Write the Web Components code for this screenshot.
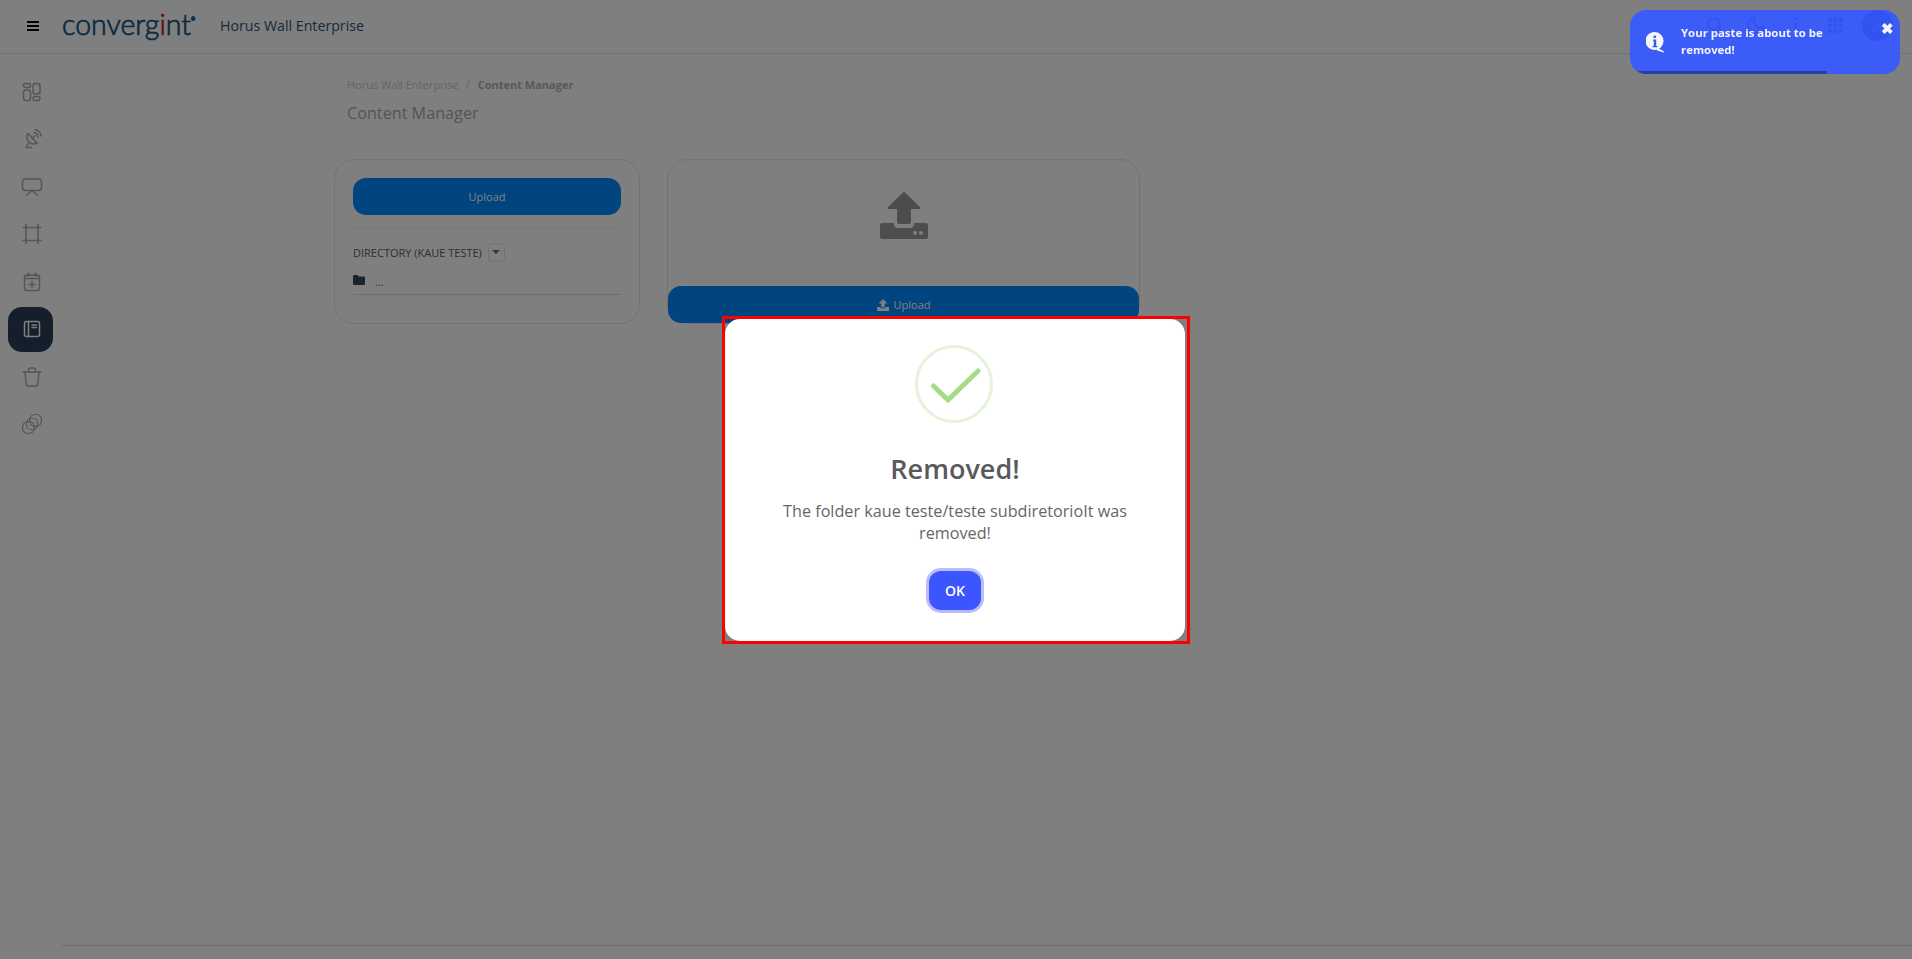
<!DOCTYPE html>
<html lang="en">
<head>
<meta charset="utf-8">
<title>Content Manager</title>
<style>
    html, body { margin: 0; height: 100%; background: #fff; overflow: hidden; }
    body { font-family: "Open Sans", "Liberation Sans", sans-serif; }
</style>
</head>
<body>
<wall-app>
    <app-header slot="header" title="Horus Wall Enterprise"></app-header>
    <side-nav slot="nav"></side-nav>
    <content-manager slot="main"></content-manager>
</wall-app>
<swal-backdrop>
    <swal-dialog heading="Removed!" text="The folder kaue teste/teste subdiretorioIt was removed!" confirm="OK"></swal-dialog>
</swal-backdrop>
<toast-note text="Your paste is about to be removed!"></toast-note>

<script>
'use strict';

const ICONS = {
    dashboard: '<rect x="1.500" y="1.500" width="7" height="4" rx="2"/><rect x="1.500" y="8" width="7" height="10.500" rx="2.500"/><rect x="11" y="1.500" width="7" height="10.500" rx="2.500"/><rect x="11" y="14.500" width="7" height="4" rx="2"/>',
    dish: '<path d="M6 4.500A6.800 6.800 0 0 0 15 14z"/><path d="M10 9.500l3-3"/><path d="M6.500 14l-2.500 4.500h5.500"/><path d="M12 3.500A4.500 4.500 0 0 1 16 8"/><path d="M13 .5A7 7 0 0 1 19 7"/>',
    screen: '<rect x=".5" y="2" width="19" height="11.500" rx="3"/><path d="M10 13.500L4.500 18"/><path d="M10 13.500l5.500 4.500"/>',
    crop: '<path d="M4 .5v19"/><path d="M16 .5v19"/><path d="M1 3.500h18"/><path d="M1 16.500h18"/>',
    calendar: '<rect x="2.500" y="3" width="15" height="15.500" rx="2.500"/><path d="M6.500 1v3"/><path d="M13.500 1v3"/><path d="M2.500 6.500h15"/><path d="M10 9.500v6"/><path d="M7 12.500h6"/>',
    notebook: '<rect x="2.500" y="2.500" width="15" height="15" rx="2"/><path d="M6.500 2.500v15"/><path d="M10 6h4.500"/><path d="M10 8.500h4.500"/>',
    trash: '<path d="M1 5h18"/><path d="M3 5l1.200 12a2 2 0 0 0 2 2h7.600a2 2 0 0 0 2-2L17 5"/><path d="M6.500 5V3a2 2 0 0 1 2-2h3a2 2 0 0 1 2 2v2"/>',
    clones: '<rect x=".5" y="7.500" width="12" height="12" rx="5.500" stroke-width="1.200"/><rect x="7.500" y=".5" width="12" height="12" rx="5.500" stroke-width="1.200"/><rect x="4.500" y="4.500" width="11" height="11" rx="4.500" stroke-width="1.200"/>',
};

class WallApp extends HTMLElement {
    constructor()
    {
        super();
        this.attachShadow({ mode: 'open' }).innerHTML = `
            <style>
                :host {
                    display: grid;
                    grid-template-rows: 54px 1fr;
                    grid-template-columns: 62px 1fr;
                    height: 100vh;
                }
                [part=header] { grid-column: 1 / 3; }
                [part=main] {
                    display: flex;
                    flex-direction: column;
                }
                footer {
                    margin-top: auto;
                    margin-bottom: 13px;
                    border-top: 1px solid #dcdcdc;
                }
            </style>
            <div part="header"><slot name="header"></slot></div>
            <div part="nav"><slot name="nav"></slot></div>
            <div part="main"><slot name="main"></slot><footer></footer></div>
        `;
    }
}

class AppHeader extends HTMLElement {
    constructor()
    {
        super();
        const title = this.getAttribute('title');
        this.attachShadow({ mode: 'open' }).innerHTML = `
            <style>
                :host {
                    display: flex;
                    align-items: center;
                    height: 54px;
                    box-sizing: border-box;
                    border-bottom: 1px solid #e4e4e4;
                    padding: 0 19px 2px 27px;
                }
                .burger { width: 12px; height: 10px; display: block; margin-right: 23px; }
                .logo {
                    font-family: Lato, "Open Sans", sans-serif;
                    font-weight: 300;
                    font-size: 28.500px;
                    line-height: 40px;
                    color: #155482;
                    width: 158px;
                    flex: none;
                    margin-top: -4px;
                    -webkit-text-stroke: .7px #155482;
                    white-space: nowrap;
                }
                .logo b { font-weight: 300; color: #c01f2a; -webkit-text-stroke-color: #c01f2a; }
                .logo sup { font-size: 5px; vertical-align: 14px; line-height: 0; }
                .title { font-size: 14.200px; font-weight: 500; color: #2f5373; }
                .tools {
                    margin-left: auto;
                    display: flex;
                    align-items: center;
                    gap: 21px;
                }
                .tools svg { display: block; width: 19px; height: 19px; fill: none; stroke: #281450; stroke-width: 2; }
                .avatar {
                    width: 31px;
                    height: 31px;
                    margin-left: -4px;
                    border-radius: 50%;
                    background: #281450;
                    color: #6d86ff;
                    font-size: 15px;
                    font-weight: 700;
                    display: grid;
                    place-items: center;
                }
            </style>
            <svg class="burger" viewBox="0 0 12 10"><path d="M0 0h12v2H0zM0 4h12v2H0zM0 8h12v2H0z" fill="#000"/></svg>
            <span class="logo">converg<b>i</b>nt<sup>®</sup></span>
            <span class="title">${title}</span>
            <div class="tools">
                <svg viewBox="0 0 19 19"><circle cx="8" cy="8" r="6"/><path d="M13 13l5 5"/></svg>
                <svg viewBox="0 0 19 19"><path d="M9 1a8 8 0 1 0 9 10A7 7 0 0 1 9 1z"/></svg>
                <svg viewBox="0 0 19 19"><path d="M9.500 1v3M9.500 7v11" stroke-width="3"/></svg>
                <svg viewBox="0 0 19 19" style="stroke:none;fill:#281450"><path d="M2 2h4v4H2zM7.500 2h4v4h-4zM13 2h4v4h-4zM2 7.500h4v4H2zM7.500 7.500h4v4h-4zM13 7.500h4v4h-4zM2 13h4v4H2zM7.500 13h4v4h-4zM13 13h4v4h-4z"/></svg>
                <span class="avatar">A</span>
            </div>
        `;
    }
}

class NavItem extends HTMLElement {
    constructor()
    {
        super();
        const icon = ICONS[this.getAttribute('icon')];
        this.attachShadow({ mode: 'open' }).innerHTML = `
            <style>
                :host {
                    display: grid;
                    place-items: center;
                    width: 45px;
                    height: 45px;
                    border-radius: 14px;
                    color: #aaa;
                }
                :host([active]) { background: #2a3e58; color: #fff; }
                svg {
                    width: 20px;
                    height: 20px;
                    margin-left: 3px;
                    fill: none;
                    stroke: currentColor;
                    stroke-width: 1.500;
                    stroke-linecap: round;
                    stroke-linejoin: round;
                    overflow: visible;
                }
            </style>
            <svg viewBox="0 0 20 20">${icon}</svg>
        `;
    }
}

class SideNav extends HTMLElement {
    constructor()
    {
        super();
        const active = 'notebook';
        const items = Object.keys(ICONS)
            .map(k => `<nav-item icon="${k}" ${k === active ? 'active' : ''}></nav-item>`)
            .join('');
        this.attachShadow({ mode: 'open' }).innerHTML = `
            <style>
                :host {
                    display: flex;
                    flex-direction: column;
                    gap: 2.500px;
                    padding: 15px 0 0 8px;
                }
            </style>
            ${items}
        `;
    }
}

class BaseCard extends HTMLElement {
    static css = `
        :host {
            display: block;
            box-sizing: border-box;
            height: 165px;
            border: 1px solid #e6e6e6;
            border-radius: 20px;
            background: #fff;
        }
        .btn {
            display: flex;
            align-items: center;
            justify-content: center;
            gap: 5px;
            height: 37px;
            background: #008aff;
            color: #fff;
            font-size: 11px;
            border-radius: 13px;
        }
    `;
}

class DirectoryCard extends BaseCard {
    constructor()
    {
        super();
        this.attachShadow({ mode: 'open' }).innerHTML = `
            <style>
                ${BaseCard.css}
                :host { width: 306px; padding: 18px 18px 0; }
                hr { border: 0; border-top: 1px dashed #e8e8e8; margin: 13px 0 0; }
                .dir {
                    display: flex;
                    align-items: center;
                    gap: 6px;
                    height: 20px;
                    margin-top: 13px;
                    font-size: 11px;
                    font-weight: 500;
                    color: #5c5c5c;
                }
                .caret {
                    display: grid;
                    place-items: center;
                    width: 17px;
                    height: 19px;
                    box-sizing: border-box;
                    border: 1px solid #e6e6e6;
                    border-radius: 4px;
                }
                .caret i { border: 4px solid transparent; border-top: 4px solid #6e6e6e; border-bottom: 0; }
                .row {
                    display: flex;
                    align-items: center;
                    gap: 10px;
                    height: 30px;
                    margin-top: 3px;
                    padding-top: 4px;
                    border-bottom: 1px solid #dcdcdc;
                    box-sizing: border-box;
                    font-size: 11px;
                    color: #5a5a5a;
                }
                .row svg { width: 12px; height: 10px; margin-top: -4px; }
            </style>
            <div class="btn">Upload</div>
            <hr>
            <div class="dir">DIRECTORY (KAUE TESTE)<span class="caret"><i></i></span></div>
            <div class="row">
                <svg viewBox="0 0 12 10"><path d="M1 0h3.500l1.500 1.500h5a1 1 0 0 1 1 1V9a1 1 0 0 1-1 1H1a1 1 0 0 1-1-1V1a1 1 0 0 1 1-1z" fill="#34465c"/></svg>
                <span>...</span>
            </div>
        `;
    }
}

class UploadCard extends BaseCard {
    constructor()
    {
        super();
        this.attachShadow({ mode: 'open' }).innerHTML = `
            <style>
                ${BaseCard.css}
                :host { width: 473px; display: flex; flex-direction: column; }
                .drop { flex: 1; display: grid; place-items: center; padding-bottom: 16px; }
                .drop svg { width: 48px; height: 48px; display: block; }
                .btn svg { width: 12px; height: 12px; }
            </style>
            <div class="drop">
                <svg viewBox="0 0 48 48" fill="#9a9a9a">
                    <path d="M24 .5L40 16a1 1 0 0 1-1 2H31v13a2 2 0 0 1-2 2H19a2 2 0 0 1-2-2V18H9a1 1 0 0 1-1-2z"/>
                    <path d="M2 32h12v1a4 4 0 0 0 4 4h12a4 4 0 0 0 4-4v-1h12a2 2 0 0 1 2 2v12a2 2 0 0 1-2 2H2a2 2 0 0 1-2-2V34a2 2 0 0 1 2-2z"/>
                    <circle cx="35" cy="42" r="2" fill="#fff"/><circle cx="41" cy="42" r="2" fill="#fff"/>
                </svg>
            </div>
            <div class="btn">
                <svg viewBox="0 0 48 48" fill="#fff">
                    <path d="M24 .5L40 16a1 1 0 0 1-1 2H31v13a2 2 0 0 1-2 2H19a2 2 0 0 1-2-2V18H9a1 1 0 0 1-1-2z"/>
                    <path d="M2 32h12v1a4 4 0 0 0 4 4h12a4 4 0 0 0 4-4v-1h12a2 2 0 0 1 2 2v12a2 2 0 0 1-2 2H2a2 2 0 0 1-2-2V34a2 2 0 0 1 2-2z"/>
                </svg>
                Upload
            </div>
        `;
    }
}

class ContentManager extends HTMLElement {
    constructor()
    {
        super();
        this.attachShadow({ mode: 'open' }).innerHTML = `
            <style>
                :host { display: block; padding: 23px 0 0 285px; }
                .crumbs { font-size: 11px; line-height: 15px; color: #c9c9c9; display: flex; gap: 7px; }
                .crumbs b { color: #b0b0b0; font-weight: 700; margin-left: 1px; }
                h1 { margin: 10px 0 0; font-size: 16.200px; line-height: 22px; font-weight: 400; color: #a8a8a8; }
                .cards { display: flex; gap: 27px; margin: 35px 0 0 -13px; }
            </style>
            <div class="crumbs"><span>Horus Wall Enterprise</span><span>/</span><b>Content Manager</b></div>
            <h1>Content Manager</h1>
            <div class="cards">
                <directory-card></directory-card>
                <upload-card></upload-card>
            </div>
        `;
    }
}

class SwalBackdrop extends HTMLElement {
    constructor()
    {
        super();
        this.attachShadow({ mode: 'open' }).innerHTML = `
            <style>
                :host {
                    position: fixed;
                    inset: 0;
                    display: grid;
                    place-items: center;
                    background: rgba(0, 0, 0, .5);
                }
            </style>
            <slot></slot>
        `;
    }
}

class SwalDialog extends HTMLElement {
    constructor()
    {
        super();
        this.attachShadow({ mode: 'open' }).innerHTML = `
            <style>
                :host {
                    display: block;
                    box-sizing: border-box;
                    width: 468px;
                    height: 328px;
                    border: 3px solid #f00;
                    padding-right: 2px;
                    margin-top: 1px;
                }
                .popup {
                    width: 460px;
                    height: 322px;
                    background: #fff;
                    border-radius: 15px;
                    display: flex;
                    flex-direction: column;
                    align-items: center;
                    color: #5a5a5a;
                }
                .icon { width: 78px; height: 78px; margin: 26px 2px 0 0; display: block; }
                h2 { margin: 29px 0 0; font-size: 27px; line-height: 34px; font-weight: 600; }
                p {
                    margin: 14px 0 0;
                    width: 360px;
                    font-size: 16.200px;
                    line-height: 22.400px;
                    text-align: center;
                    color: #666;
                }
                button {
                    margin-top: 26px;
                    width: 52px;
                    height: 39px;
                    border: 0;
                    border-radius: 12px;
                    background: #3b55ff;
                    box-shadow: 0 0 0 3px #b9bcf7;
                    color: #fff;
                    font: 600 14px "Open Sans", sans-serif;
                }
            </style>
            <div class="popup">
                <svg class="icon" viewBox="0 0 78 78">
                    <circle cx="39" cy="39" r="37.500" fill="none" stroke="#e4f3da" stroke-width="3"/>
                    <path d="M18.500 41L33 55L63 26" fill="none" stroke="#a5dc86" stroke-width="5" stroke-linecap="round" stroke-linejoin="round"/>
                </svg>
                <h2>${this.getAttribute('heading')}</h2>
                <p>${this.getAttribute('text')}</p>
                <button>${this.getAttribute('confirm')}</button>
            </div>
        `;
    }
}

class ToastNote extends HTMLElement {
    constructor()
    {
        super();
        this.attachShadow({ mode: 'open' }).innerHTML = `
            <style>
                :host {
                    position: fixed;
                    top: 10px;
                    right: 12px;
                    width: 270px;
                    height: 64px;
                    box-sizing: border-box;
                    border-radius: 16px;
                    overflow: hidden;
                    display: flex;
                    align-items: center;
                    background: rgba(54, 89, 255, .93);
                    color: #f2f3ff;
                    padding: 0 20px 3px 16px;
                    font-size: 11.400px;
                    line-height: 17px;
                    font-weight: 700;
                }
                svg { width: 19px; height: 21px; margin: 3px 16px 0 0; flex: none; }
                span { width: 165px; }
                .close {
                    position: absolute;
                    top: 9px;
                    right: 7px;
                    width: 12px;
                    font-size: 15px;
                    line-height: 18px;
                }
                .bar {
                    position: absolute;
                    left: 0;
                    bottom: 0;
                    width: 197px;
                    height: 3px;
                    background: #2b3fa8;
                }
            </style>
            <svg viewBox="0 0 19 21">
                <path d="M9 0a9 9 0 1 1-1 18A9 9 0 0 1 9 0zM12 16l6 3.500v1l-7-2z" fill="#f4f5ff"/>
                <path d="M7 7.500h3.200v6.500h1.300v1.200h-5V14h1.300V8.700H7z" fill="#3b5cd0"/>
                <circle cx="8.800" cy="4.800" r="1.400" fill="#3b5cd0"/>
            </svg>
            <span>${this.getAttribute('text')}</span>
            <span class="close">✖</span>
            <div class="bar"></div>
        `;
    }
}

customElements.define('wall-app', WallApp);
customElements.define('app-header', AppHeader);
customElements.define('nav-item', NavItem);
customElements.define('side-nav', SideNav);
customElements.define('directory-card', DirectoryCard);
customElements.define('upload-card', UploadCard);
customElements.define('content-manager', ContentManager);
customElements.define('swal-backdrop', SwalBackdrop);
customElements.define('swal-dialog', SwalDialog);
customElements.define('toast-note', ToastNote);
</script>
</body>
</html>
